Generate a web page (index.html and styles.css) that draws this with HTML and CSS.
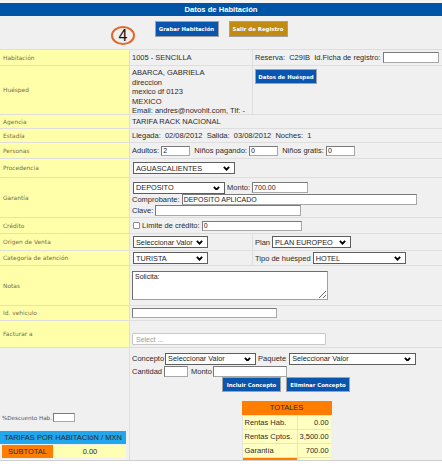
FILE: index.html
```html
<!DOCTYPE html>
<html lang="es">

<head>
    <meta charset="UTF-8">
    <meta name="viewport" content="width=device-width, initial-scale=1.0">
    <title>Datos de Habitación</title>
    <link rel="stylesheet" href="styles.css">
</head>

<body>
    <div class="viewport">
        <div class="title">Datos de Habitación</div>
        <div class="toolbar">
            <span class="step">4</span>
            <button class="btn btn-blue btn-grabar">Grabar Habitación</button>
            <button class="btn btn-gold btn-salir">Salir de Registro</button>
        </div>

        <div class="form">
            <div class="lbl">Habitación</div>
            <div class="val">1005 - SENCILLA</div>
            <div class="val">Reserva:&nbsp; C29IB &nbsp;Id.Ficha de registro:&nbsp;<input class="in in-ficha"></div>

            <div class="lbl">Huésped</div>
            <div class="val guest">ABARCA, GABRIELA<br>direccion<br>mexico df 0123<br>MEXICO<br>Email: andres@novohit.com, Tlf: -</div>
            <div class="val top"><button class="btn btn-blue btn-huesped">Datos de Huésped</button></div>

            <div class="lbl">Agencia</div>
            <div class="val span2">TARIFA RACK NACIONAL</div>

            <div class="lbl">Estadía</div>
            <div class="val span2">Llegada:&nbsp; 02/08/2012 &nbsp;Salida:&nbsp; 03/08/2012 &nbsp;Noches:&nbsp; 1</div>

            <div class="lbl">Personas</div>
            <div class="val span2">
                Adultos:&nbsp;<input class="in in-num" value="2">&nbsp; Niños pagando:&nbsp;<input class="in in-num" value="0">&nbsp; Niños gratis:&nbsp;<input class="in in-num" value="0">
            </div>

            <div class="lbl">Procedencia</div>
            <div class="val span2">
                <span class="sel sel-proc">
                    <select><option>AGUASCALIENTES</option></select>
                    <svg class="chev" viewBox="0 0 8 5"><path d="M1 1 L4 4 L7 1" /></svg>
                </span>
            </div>

            <div class="lbl">Garantía</div>
            <div class="val span2 stack">
                <div class="line">
                    <span class="sel sel-gar">
                        <select><option>DEPOSITO</option></select>
                        <svg class="chev" viewBox="0 0 8 5"><path d="M1 1 L4 4 L7 1" /></svg>
                    </span>&nbsp;Monto:&nbsp;<input class="in in-monto" value="700.00">
                </div>
                <div class="line">Comprobante:&nbsp;<input class="in in-comp" value="DEPOSITO APLICADO"></div>
                <div class="line">Clave:&nbsp;<input class="in in-clave"></div>
            </div>

            <div class="lbl">Crédito</div>
            <div class="val span2"><input type="checkbox" class="chk"> Límite de crédito:&nbsp;<input class="in in-limite" value="0"></div>

            <div class="lbl">Origen de Venta</div>
            <div class="val">
                <span class="sel sel-short">
                    <select><option>Seleccionar Valor</option></select>
                    <svg class="chev" viewBox="0 0 8 5"><path d="M1 1 L4 4 L7 1" /></svg>
                </span>
            </div>
            <div class="val">Plan&nbsp;
                <span class="sel sel-plan">
                    <select><option>PLAN EUROPEO</option></select>
                    <svg class="chev" viewBox="0 0 8 5"><path d="M1 1 L4 4 L7 1" /></svg>
                </span>
            </div>

            <div class="lbl">Categoria de atención</div>
            <div class="val">
                <span class="sel sel-short">
                    <select><option>TURISTA</option></select>
                    <svg class="chev" viewBox="0 0 8 5"><path d="M1 1 L4 4 L7 1" /></svg>
                </span>
            </div>
            <div class="val">Tipo de huésped&nbsp;
                <span class="sel sel-tipo">
                    <select><option>HOTEL</option></select>
                    <svg class="chev" viewBox="0 0 8 5"><path d="M1 1 L4 4 L7 1" /></svg>
                </span>
            </div>

            <div class="lbl">Notas</div>
            <div class="val span2"><textarea class="notes">Solicita:</textarea></div>

            <div class="lbl">Id. vehiculo</div>
            <div class="val span2"><input class="in in-vehiculo"></div>

            <div class="lbl">Facturar a</div>
            <div class="val span2 bottom"><input class="search" placeholder="Select ..."></div>

            <div class="cell-rates">
                <div class="discount">%Descuento Hab.<input class="in in-desc"></div>
                <div class="rates">
                    <div class="rates-head">TARIFAS POR HABITACIóN / MXN</div>
                    <div class="rates-row">
                        <div class="orange">SUBTOTAL</div>
                        <div class="yellow">0.00</div>
                    </div>
                    <div class="rates-row">
                        <div class="yellow"></div>
                        <div class="yellow"></div>
                    </div>
                </div>
            </div>

            <div class="val span2 concepts">
                <div class="line">
                    Concepto
                    <span class="sel sel-concepto">
                        <select><option>Seleccionar Valor</option></select>
                        <svg class="chev" viewBox="0 0 8 5"><path d="M1 1 L4 4 L7 1" /></svg>
                    </span>
                    Paquete&nbsp;
                    <span class="sel sel-paquete">
                        <select><option>Seleccionar Valor</option></select>
                        <svg class="chev" viewBox="0 0 8 5"><path d="M1 1 L4 4 L7 1" /></svg>
                    </span>
                </div>
                <div class="line">
                    Cantidad <input class="in in-cant"> <span class="monto-label">Monto</span><input class="in in-cmonto">
                </div>
                <div class="actions">
                    <button class="btn btn-blue btn-incluir">Incluir Concepto</button>
                    <button class="btn btn-blue btn-eliminar">Eliminar Concepto</button>
                </div>

                <div class="totals">
                    <div class="totals-head">TOTALES</div>
                    <div class="t-cell">Rentas Hab.</div>
                    <div class="t-cell num">0.00</div>
                    <div class="t-cell">Rentas Cptos.</div>
                    <div class="t-cell num">3,500.00</div>
                    <div class="t-cell">Garantía</div>
                    <div class="t-cell num">700.00</div>
                    <div class="t-cell t-total"></div>
                    <div class="t-cell num"></div>
                </div>
            </div>
        </div>
    </div>
</body>

</html>
```

FILE: styles.css
```css
* {
    box-sizing: border-box;
}

body {
    margin: 0;
    background: #fff;
    font-family: "Liberation Sans", Arial, sans-serif;
    font-size: 7.5px;
    color: #2b2b2b;
}

.viewport {
    height: 461px;
    overflow: hidden;
    padding-top: 3px;
    background: #f5f5f5;
    border-bottom: 1px solid #cfcfcf;
}

.title {
    height: 13px;
    line-height: 13px;
    background: #0054a6;
    color: #fff;
    font-weight: bold;
    font-size: 7.6px;
    text-align: center;
}

.toolbar {
    position: relative;
    height: 34px;
    padding-top: 5px;
    background: #f0f0f0;
    border-bottom: 1px solid #dedede;
    display: flex;
    justify-content: center;
    align-items: flex-start;
    gap: 10px;
}

/* numero del paso, encima de la barra */
.step {
    position: absolute;
    left: 111px;
    top: 10px;
    width: 24px;
    height: 19px;
    border: 2px solid #e2672a;
    border-radius: 50%;
    font-size: 16px;
    line-height: 15px;
    text-align: center;
    color: #111;
}

.btn {
    height: 16px;
    padding: 0;
    border: 1px solid #a2a2a2;
    color: #fff;
    font-family: "DejaVu Sans", Verdana, sans-serif;
    font-weight: bold;
    font-size: 5.4px;
    cursor: pointer;
}

.btn-blue {
    background: #0a55ad;
}

.btn-gold {
    background: #c18a10;
}

.btn-grabar {
    width: 64px;
}

.btn-salir {
    width: 59px;
}

.btn-huesped {
    width: 62px;
    height: 15px;
}

.btn-incluir {
    width: 59px;
    height: 15px;
}

.btn-eliminar {
    width: 64px;
    height: 15px;
}

/* rejilla principal del formulario */
.form {
    display: grid;
    grid-template-columns: 129px 122px 1fr;
    grid-template-rows: 15px 48px 13px 13px 15px 18px 39px 15px 16px 14px 39px 14px 26px 140px;
    gap: 1px;
    background: #dedede;
}

.lbl {
    background: #ffffaa;
    color: #7d6e44;
    font-family: "DejaVu Sans", Verdana, sans-serif;
    font-size: 5.9px;
    display: flex;
    align-items: center;
    padding-left: 3px;
}

.val {
    background: #f0f0f0;
    display: flex;
    align-items: center;
    padding: 0 2px;
    white-space: nowrap;
}

.span2 {
    grid-column: span 2;
}

.val.top {
    align-items: flex-start;
    padding-top: 3px;
}

.val.bottom {
    align-items: flex-end;
    padding-bottom: 2px;
}

.guest {
    display: block;
    padding-top: 2px;
    line-height: 9.6px;
}

.stack {
    flex-direction: column;
    align-items: flex-start;
    justify-content: flex-start;
    padding-top: 3px;
}

.line {
    display: flex;
    align-items: center;
    height: 11px;
}

.stack .line:first-child {
    height: 13px;
}

.in {
    height: 11px;
    padding: 0 1px;
    border: 1px solid #7a7a7a;
    border-right-color: #a8a8a8;
    border-bottom-color: #a8a8a8;
    background: #fff;
    font-family: "Liberation Sans", Arial, sans-serif;
    font-size: 7px;
    color: #222;
    border-radius: 0;
    outline: none;
}

.in-ficha {
    width: 56px;
}

.in-num {
    width: 29px;
    height: 10px;
}

.in-monto {
    width: 56px;
}

.in-comp {
    width: 235px;
}

.in-clave {
    width: 146px;
}

.in-limite {
    width: 100px;
    height: 10px;
}

.in-vehiculo {
    width: 145px;
    height: 10px;
}

.in-desc {
    width: 22px;
    height: 9px;
    margin-left: 1px;
}

.in-cant {
    width: 24px;
    margin-left: 2px;
}

.in-cmonto {
    width: 74px;
    margin-left: 1px;
}

.monto-label {
    margin-left: 3px;
}

.chk {
    -webkit-appearance: none;
    appearance: none;
    width: 7px;
    height: 7px;
    margin: 0 2px 0 1px;
    border: 1px solid #8c8c8c;
    border-radius: 1px;
    background: #fff;
}

/* selects con flecha dibujada */
.sel {
    position: relative;
    display: inline-block;
    height: 12px;
}

.sel select {
    -webkit-appearance: none;
    appearance: none;
    width: 100%;
    height: 12px;
    padding: 0 12px 0 2px;
    border: 1px solid #5e5e5e;
    border-radius: 0;
    background: #fff;
    font-family: "Liberation Sans", Arial, sans-serif;
    font-size: 7.3px;
    color: #1e1e1e;
}

.chev {
    position: absolute;
    right: 5px;
    top: 4px;
    width: 7px;
    height: 4.5px;
    fill: none;
    stroke: #000;
    stroke-width: 2.2;
    pointer-events: none;
}

.sel-proc {
    width: 102px;
    margin-left: 1px;
}

.sel-gar {
    width: 92px;
    margin-left: 1px;
}

.sel-short {
    width: 75px;
    margin-left: 1px;
}

.sel-plan {
    width: 79px;
}

.sel-tipo {
    width: 93px;
}

.sel-concepto {
    width: 91px;
}

.sel-paquete {
    width: 127px;
}

.notes {
    width: 196px;
    height: 29px;
    padding: 1px 2px;
    border: 1px solid #6e6e6e;
    border-right-color: #a0a0a0;
    border-bottom-color: #a0a0a0;
    font-family: "Liberation Sans", Arial, sans-serif;
    font-size: 7px;
    color: #222;
    border-radius: 0;
}

.search {
    width: 194px;
    height: 12px;
    padding: 0 3px;
    border: 1px solid #c8c8c8;
    border-radius: 1px;
    background: #fff;
    font-family: "Liberation Sans", Arial, sans-serif;
    font-size: 7px;
}

.search::placeholder {
    color: #9a9a9a;
}

/* ultima fila: tarifas y conceptos */
.cell-rates {
    background: #f0f0f0;
    padding-top: 65px;
}

.discount {
    display: flex;
    align-items: center;
    height: 9px;
    padding-left: 2px;
    font-family: "DejaVu Sans", Verdana, sans-serif;
    font-size: 5.6px;
    color: #555;
}

.rates {
    width: 126px;
    margin-top: 9px;
    text-align: center;
}

.rates-head {
    height: 13px;
    line-height: 13px;
    background: #22a6ec;
    color: #2a2a2a;
}

.rates-row {
    display: grid;
    grid-template-columns: 51px 1fr;
    gap: 1px;
    padding: 1px 0 0 2px;
}

.orange {
    height: 13px;
    line-height: 13px;
    background: #ff7d00;
    color: #2a2a2a;
}

.yellow {
    height: 13px;
    line-height: 13px;
    background: #ffffb4;
}

.concepts {
    flex-direction: column;
    align-items: stretch;
    justify-content: flex-start;
    padding-top: 4px;
}

.concepts .line {
    height: 12px;
    gap: 0;
}

.concepts .line:first-child {
    height: 13px;
}

.concepts .sel {
    margin: 0 2px 0 1px;
}

.actions {
    display: flex;
    justify-content: center;
    gap: 5px;
}

.totals {
    width: 89px;
    margin: 9px auto 0;
    display: grid;
    grid-template-columns: 54px 1fr;
    gap: 1px;
    padding: 0 1px 1px;
    background: #e2e2e2;
}

.totals-head {
    grid-column: span 2;
    height: 14px;
    line-height: 14px;
    margin: 0 -1px;
    background: #ff7d00;
    text-align: center;
    color: #2a2a2a;
}

.t-cell {
    height: 13px;
    line-height: 13px;
    padding: 0 2px;
    background: #ffffc2;
}

.t-cell.num {
    text-align: right;
}

.t-total {
    background: #ff7d00;
}
```
